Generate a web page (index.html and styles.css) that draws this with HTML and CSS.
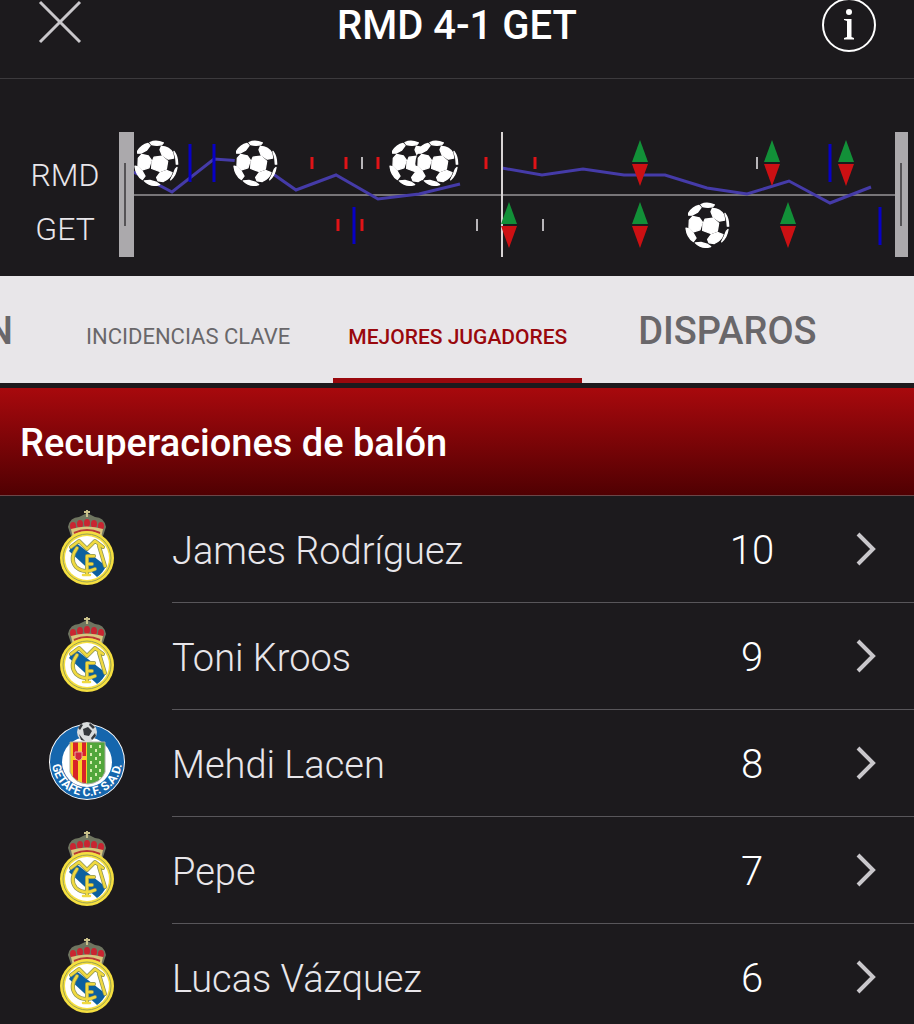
FILE: index.html
```html
<!DOCTYPE html>
<html lang="es">
<head>
<meta charset="utf-8">
<meta name="viewport" content="width=device-width, initial-scale=1">
<title>RMD 4-1 GET</title>
<link rel="stylesheet" href="styles.css">
</head>
<body>
<svg class="defs" aria-hidden="true">
  <symbol id="ball" viewBox="0 0 135 140">
    <circle cx="67" cy="70" r="63" fill="#1c1a1d"/>
    <g fill="#fff" stroke="#fff" stroke-width="4" stroke-linejoin="round">
      <path d="M48 7Q66-1 88 8L83 14Q66 17 53 13Z"/>
      <path d="M11 33Q23 14 42 10L48 16L38 30L21 39L11 39Z"/>
      <path d="M82 19Q105 20 116 38L119 54L103 57L84 44L78 29Z"/>
      <path d="M23 43L43 47L52 60L45 83L26 89L12 76L13 54Z"/>
      <path d="M60 51L84 48L101 63L97 87L77 94L53 85L54 66Z"/>
      <path d="M3 78L12 80L24 92L33 108L25 118Q6 105 3 78Z"/>
      <path d="M99 91L114 97Q109 114 88 124L72 122L68 112L78 98Z"/>
      <path d="M31 122L48 121L66 126L77 133Q50 142 31 122Z"/>
      <path d="M120 34Q131 49 131 72L127 72Q127 53 120 34Z"/>
      <path d="M129 82Q126 105 110 119Q119 102 124 87Z"/>
    </g>
  </symbol>
  <symbol id="sub" viewBox="0 0 16 46">
    <path d="M8 0L16 22H0Z" fill="#129038"/>
    <path d="M0 24H16L8 46Z" fill="#cc1013"/>
  </symbol>
  <symbol id="madrid" viewBox="0 0 56 76">
    <path d="M13 30L9 18Q11 8 20 8L28 4L36 8Q45 8 47 18L43 30Z" fill="#6f7560"/>
    <g fill="#c92531"><ellipse cx="14" cy="17" rx="3" ry="4"/><ellipse cx="21" cy="15" rx="3" ry="4"/><ellipse cx="28" cy="14" rx="3" ry="4"/><ellipse cx="35" cy="15" rx="3" ry="4"/><ellipse cx="42" cy="17" rx="3" ry="4"/></g>
    <path d="M12 20Q28 15 44 20L42 29Q28 24 14 29Z" fill="#d8c67c"/>
    <path d="M15 24Q28 18 41 24" fill="none" stroke="#b93a35" stroke-width="2"/>
    <path d="M28 1V8M25 3H31" stroke="#c9c08a" stroke-width="2"/>
    <circle cx="28" cy="49" r="27" fill="#f5df3f"/>
    <circle cx="28" cy="49" r="24" fill="none" stroke="#98a053"/>
    <circle cx="28" cy="49" r="22" fill="#fff"/>
    <path d="M10 42L16 33L47 57Q44 64 38 68Z" fill="#0b609f"/>
    <path d="M12 38L20 32L28 40L36 32L44 38M18 39Q10 50 17 58Q25 65 36 60M40 37L46 57M28 65V47H35M28 55H33" fill="none" stroke="#8b9357" stroke-width="4" stroke-linecap="round" stroke-linejoin="round"/>
    <path d="M12 38L20 32L28 40L36 32L44 38M18 39Q10 50 17 58Q25 65 36 60M40 37L46 57M28 65V47H35M28 55H33M24 66H31" fill="none" stroke="#f0d93f" stroke-width="2.500" stroke-linecap="round" stroke-linejoin="round"/>
  </symbol>
  <symbol id="getafe" viewBox="0 0 78 80">
    <circle cx="39" cy="41" r="38" fill="#fff"/>
    <circle cx="39" cy="41" r="37" fill="#1566ad"/>
    <circle cx="39" cy="41" r="25" fill="#fff"/>
    <path d="M22 21H39V63Q26 62 22 51Z" fill="#f8cf28"/>
    <path d="M25 21H30V60L25 56ZM34 21H38V63L34 62Z" fill="#d92329"/>
    <path d="M22 35H39V39H22Z" fill="#f8cf28"/>
    <path d="M27 31H34V37Q31 42 27 37Z" fill="#cf263c" stroke="#e9a7a0"/>
    <path d="M39 21H57V51Q53 62 39 63Z" fill="#52a63b"/>
    <g stroke="#d7edb0" stroke-width="2" stroke-dasharray="3 5"><path d="M43 24V60M52 24V58"/><path d="M48 28V60"/></g>
    <path d="M22 21H57V51Q53 62 40 63Q26 62 22 51Z" fill="none" stroke="#a8aaa0"/>
    <path id="rim" d="M4 40A35 35 0 0 0 74 40" fill="none"/>
    <text class="crest-text"><textPath href="#rim" startOffset="4">GETAFE C.F. S.A.D.</textPath></text>
    <circle cx="39" cy="11" r="10" fill="#d9dcdd"/>
    <path d="M35 8L40 6L44 10L41 15L36 14ZM30 7L33 3L35 4L32 9ZM42 2L47 6L45 8L41 4ZM47 12L48 15L44 19L43 17ZM31 13L34 17L37 20L33 19Z" fill="#34373b"/>
  </symbol>
</svg>

<header class="topbar">
  <button class="icon-button" aria-label="Cerrar">
    <svg width="44" height="44" viewBox="0 0 44 44"><path d="M2 2L42 42M42 2L2 42" stroke="#c9c7cb" stroke-width="3"/></svg>
  </button>
  <h1 class="score">RMD 4-1 GET</h1>
  <button class="icon-button info" aria-label="Información">
    <svg width="54" height="52" viewBox="0 0 54 52"><circle cx="27" cy="25" r="26" fill="none" stroke="#fff" stroke-width="2"/><circle cx="27" cy="12" r="3" fill="#fff"/><path d="M22 19H29.500V37L32 38V39.500H22V38L25 37V21L22 20Z" fill="#fff"/></svg>
  </button>
</header>

<section class="timeline" aria-label="Cronología">
  <div class="teams"><span>RMD</span><span>GET</span></div>
  <svg class="track" viewBox="118 132 790 125" role="img" aria-label="Eventos del partido">
    <path d="M133 195H896" stroke="#777578" stroke-width="2"/>
    <g fill="none" stroke="#453ba8" stroke-width="3">
      <path d="M133 172L142 176L172 192L214 159L256 162L296 190L336 175L378 199L419 194L460 184"/>
      <path d="M502 168L542 175L583 169L624 175H665L707 188L747 194L789 181L830 203L871 187"/>
    </g>
    <path d="M502 132V257" stroke="#d8d4d4" stroke-width="2"/>
    <path d="M190 144V182M214 144V182M354 207V244M830 144V182M880 207V245" stroke="#0700c5" stroke-width="3"/>
    <path d="M312 157V169M346 157V169M378 157V169M486 157V169M535 157V169M338 219V231M362 219V231" stroke="#e01317" stroke-width="3"/>
    <path d="M362 157V169M757 157V169M477 219V231M543 219V231" stroke="#b8b6b9" stroke-width="2"/>
    <use href="#sub" x="632" y="140" width="16" height="46"/>
    <use href="#sub" x="764" y="140" width="16" height="46"/>
    <use href="#sub" x="838" y="140" width="16" height="46"/>
    <use href="#sub" x="501" y="202" width="16" height="46"/>
    <use href="#sub" x="632" y="202" width="16" height="46"/>
    <use href="#sub" x="780" y="202" width="16" height="46"/>
    <use href="#ball" x="134" y="140" width="45" height="47"/>
    <use href="#ball" x="233" y="140" width="45" height="47"/>
    <use href="#ball" x="389" y="140" width="45" height="47"/>
    <use href="#ball" x="414" y="140" width="45" height="47"/>
    <use href="#ball" x="685" y="202" width="45" height="47"/>
    <path d="M119 132H134V257H119ZM895 132H908V257H895Z" fill="#aba9ac"/>
    <path d="M125 163V226M901 163V226" stroke="#555356" stroke-width="2"/>
  </svg>
</section>

<nav class="tabs" role="tablist">
  <button class="tab large cut" role="tab">N</button>
  <button class="tab" role="tab">INCIDENCIAS CLAVE</button>
  <button class="tab active" role="tab" aria-selected="true">MEJORES JUGADORES</button>
  <button class="tab large" role="tab">DISPAROS</button>
</nav>

<main>
  <h2 class="category">Recuperaciones de balón</h2>
  <ul class="players">
    <li><a class="player" href="#"><svg class="crest"><use href="#madrid"/></svg><span class="detail"><span class="name">James Rodríguez</span><span class="value">10</span><svg class="chevron" viewBox="0 0 20 34"><path d="M2 2L17 17L2 32"/></svg></span></a></li>
    <li><a class="player" href="#"><svg class="crest"><use href="#madrid"/></svg><span class="detail"><span class="name">Toni Kroos</span><span class="value">9</span><svg class="chevron" viewBox="0 0 20 34"><path d="M2 2L17 17L2 32"/></svg></span></a></li>
    <li><a class="player" href="#"><svg class="crest round"><use href="#getafe"/></svg><span class="detail"><span class="name">Mehdi Lacen</span><span class="value">8</span><svg class="chevron" viewBox="0 0 20 34"><path d="M2 2L17 17L2 32"/></svg></span></a></li>
    <li><a class="player" href="#"><svg class="crest"><use href="#madrid"/></svg><span class="detail"><span class="name">Pepe</span><span class="value">7</span><svg class="chevron" viewBox="0 0 20 34"><path d="M2 2L17 17L2 32"/></svg></span></a></li>
    <li><a class="player" href="#"><svg class="crest"><use href="#madrid"/></svg><span class="detail"><span class="name">Lucas Vázquez</span><span class="value">6</span><svg class="chevron" viewBox="0 0 20 34"><path d="M2 2L17 17L2 32"/></svg></span></a></li>
  </ul>
</main>
</body>
</html>
```
FILE: styles.css
```css
* { box-sizing: border-box; }
html { overflow: hidden auto; scrollbar-width: none; }
body {
  margin: 0;
  background: #1c1a1d;
  color: #fff;
  font-family: Roboto, "Liberation Sans", sans-serif;
}
button { border: 0; padding: 0; background: none; color: inherit; font: inherit; }
.defs { position: absolute; width: 0; height: 0; }

.topbar {
  display: grid;
  grid-template-columns: 1fr auto 1fr;
  align-items: start;
  height: 79px;
  padding: 0 38px;
  border-bottom: 1px solid #3c3a3d;
}
.icon-button { display: block; justify-self: start; }
.icon-button svg { display: block; }
.icon-button.info { justify-self: end; }
.score { margin: 0; font-size: 40px; line-height: 52px; font-weight: 500; }

.timeline { display: flex; align-items: center; padding: 53px 6px 19px 0; }
.teams {
  flex: 0 0 118px;
  display: flex;
  flex-direction: column;
  gap: 10px;
  padding: 14px 0 0 12px;
  text-align: center;
  font-size: 32px;
  line-height: 44px;
  font-weight: 300;
  color: #e8e6ea;
}
.track { display: block; flex: 1; min-width: 0; }

.tabs {
  display: flex;
  gap: 28px;
  height: 107px;
  margin-bottom: 5px;
  overflow: hidden;
  background: #e8e6e9;
  color: #69676a;
}
.tab {
  flex: none;
  padding: 20px 15px 0;
  border-bottom: 5px solid transparent;
  font-size: 22px;
  line-height: 82px;
  white-space: nowrap;
}
.tab.active { border-color: #99080d; color: #99080d; font-size: 21px; font-weight: 500; }
.tab.large { padding: 8px 28px 0; font-size: 38px; font-weight: 500; line-height: 94px; }
.tab.cut { display: flex; justify-content: flex-end; width: 43px; padding: 8px 30px 0 0; }

.category {
  margin: 0;
  padding: 3px 20px 0;
  border-bottom: 1px solid #6b4648;
  background: linear-gradient(#a8090d, #500002);
  font-size: 38px;
  line-height: 104px;
  font-weight: 500;
}
.players { margin: 0; padding: 0; list-style: none; }
.player { display: flex; align-items: center; height: 107px; color: #e8e6ea; text-decoration: none; }
.crest { flex: none; width: 56px; height: 76px; margin: 0 57px 6px 59px; }
.crest.round { width: 78px; height: 80px; margin: 0 46px 6px 48px; }
.crest-text { fill: #fff; font-size: 12px; font-weight: 700; }
.detail {
  flex: 1;
  display: flex;
  align-items: center;
  height: 107px;
  padding-right: 38px;
  border-bottom: 1px solid #58565a;
}
.name, .value { padding-top: 4px; font-size: 38px; line-height: 52px; font-weight: 300; }
.name { flex: 1; }
.value { width: 80px; margin-right: 64px; color: #fff; text-align: center; font-size: 40px; }
.chevron { width: 20px; height: 34px; fill: none; stroke: #c9c7cb; stroke-width: 4; }
```
